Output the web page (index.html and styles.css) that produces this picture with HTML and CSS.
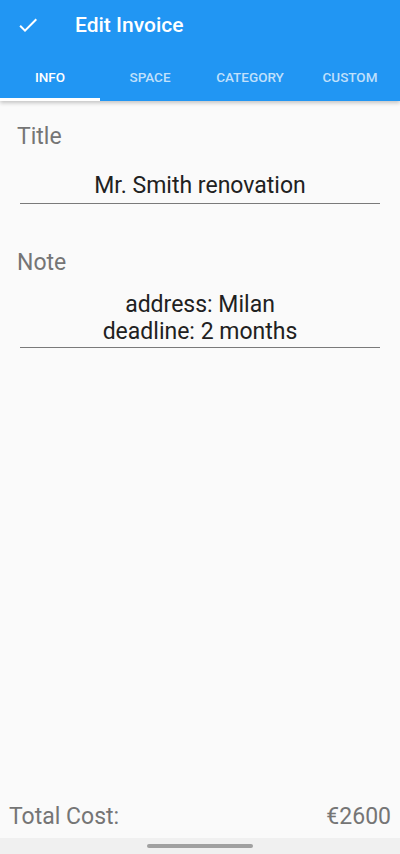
FILE: index.html
```html
<!DOCTYPE html>
<html>
<head>
<meta charset="utf-8">
<link rel="stylesheet" href="styles.css">
</head>
<body>
<div class="app">
  <header class="appbar">
    <div class="toolbar">
      <svg class="check" viewBox="0 0 24 24" width="24" height="24"><path d="M9 16.17L4.83 12l-1.42 1.41L9 19 21 7l-1.41-1.41z" fill="#fff"/></svg>
      <div class="title">Edit Invoice</div>
    </div>
    <nav class="tabs">
      <div class="tab active">INFO</div>
      <div class="tab">SPACE</div>
      <div class="tab">CATEGORY</div>
      <div class="tab">CUSTOM</div>
    </nav>
  </header>
  <main class="content">
    <div class="field">
      <div class="label">Title</div>
      <div class="input">Mr. Smith renovation</div>
    </div>
    <div class="field">
      <div class="label">Note</div>
      <div class="input multi">address: Milan<br>deadline: 2 months</div>
    </div>
  </main>
  <footer class="total">
    <span>Total Cost:</span>
    <span>€2600</span>
  </footer>
  <div class="navbar"><div class="handle"></div></div>
</div>
</body>
</html>
```
FILE: styles.css
```css
* { box-sizing: border-box; }
html, body { margin: 0; padding: 0; }
body {
  font-family: Roboto, "Noto Sans", sans-serif;
  background: #fafafa;
}
.app {
  width: 400px;
  height: 854px;
  display: flex;
  flex-direction: column;
}
.appbar {
  background: #2196f3;
  height: 101px;
  box-shadow: 0 2px 4px rgba(0,0,0,0.22);
  position: relative;
  z-index: 1;
  display: flex;
  flex-direction: column;
}
.toolbar {
  height: 49px;
  display: flex;
  align-items: center;
  padding-left: 16px;
}
.check { display: block; margin-top: 1px; }
.title {
  color: #fff;
  font-size: 21px;
  font-weight: 500;
  margin-left: 35px;
  margin-top: 1px;
}
.tabs {
  flex: 1;
  display: flex;
}
.tab {
  flex: 1;
  display: flex;
  align-items: center;
  justify-content: center;
  color: rgba(255,255,255,0.72);
  font-size: 13.5px;
  font-weight: 500;
  padding-top: 6px;
  border-bottom: 3px solid transparent;
}
.tab.active {
  color: #fff;
  border-bottom-color: #fff;
}
.content {
  flex: 1;
  padding: 21px 20px 0 20px;
}
.field { margin-bottom: 44px; }
.label {
  color: #757575;
  font-size: 23px;
  margin-left: -3px;
  line-height: 30px;
}
.input {
  margin-top: 20px;
  text-align: center;
  color: #212121;
  font-size: 23px;
  line-height: 28px;
  padding-bottom: 3px;
  border-bottom: 1px solid #7a7a7a;
}
.input.multi { margin-top: 13px; line-height: 27px; padding-bottom: 2px; }
.total {
  display: flex;
  justify-content: space-between;
  padding: 0 9px 6px 9px;
  height: 38px;
  align-items: center;
  color: #757575;
  font-size: 23px;
}
.navbar {
  height: 16px;
  background: #f0f0f0;
  display: flex;
  justify-content: center;
  padding-top: 6px;
}
.handle {
  width: 106px;
  height: 4px;
  border-radius: 2px;
  background: #a0a0a0;
}
```
